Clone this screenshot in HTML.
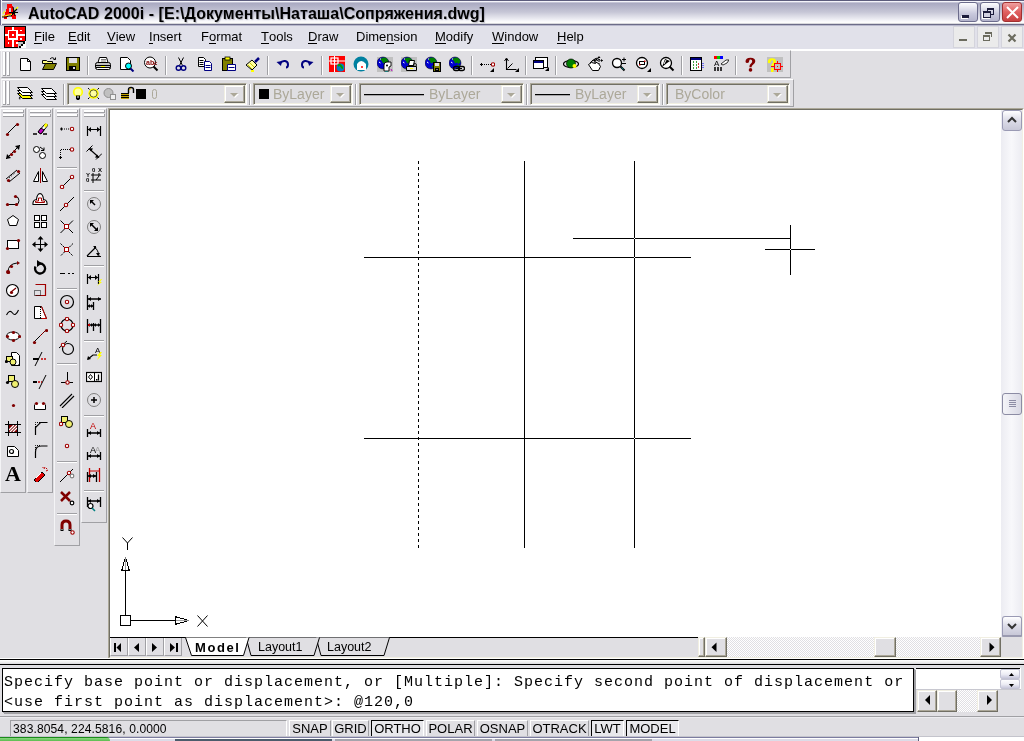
<!DOCTYPE html><html><head><meta charset="utf-8"><style>*{margin:0;padding:0;box-sizing:border-box}
html,body{width:1024px;height:741px;overflow:hidden;background:#e0dfe3;font-family:"Liberation Sans",sans-serif;position:relative}
#root{position:absolute;left:0;top:0;width:1024px;height:741px;will-change:transform}
.a{position:absolute}
#title{left:0;top:0;width:1024px;height:25px;border-left:1px solid #6a6a8a;box-shadow:inset 1px 0 0 #f4f4fa;background:linear-gradient(#5c5c7c 0,#5c5c7c 1px,#f4f4fa 1px,#f4f4fa 2px,#c4c4d6 2px,#c4c4d6 3px,#a9a9c1 3px,#c6c6d6 12px,#f6f6fa 21px,#fcfcfc 22px,#fcfcfc 23px,#d8d8dc 23px,#d8d8dc 24px,#6c6c88 24px,#6c6c88 25px)}
#title .t{left:27px;top:5px;letter-spacing:.05px;font-size:16px;font-weight:bold;color:#000;line-height:18px;white-space:nowrap;text-shadow:1px 1px 1px rgba(120,120,140,.45)}
.tbtn{top:2px;width:20px;height:20px;border:1px solid #6c6c8c;border-radius:3px;background:linear-gradient(#fdfdff,#c8c8dc 60%,#b4b4cc)}
.tbtn.cls{border-color:#a03030;background:linear-gradient(#f0a0a0,#e06060 50%,#c84040)}
#menubar{left:0;top:25px;width:1024px;height:24px;background:linear-gradient(#b8b8cc 0,#b8b8cc 1px,#e1e1ea 1px)}
.mbtn{top:26px;width:22px;height:22px;background:#ebebeb;border:1px solid #d4d4dc}
.menu{top:29px;font-size:13px;line-height:15px;color:#000;white-space:nowrap}
.menu u{text-decoration:none;border-bottom:1px solid #000;display:inline-block;line-height:13px}
.tb{background:#e0dfe3;border-top:1px solid #fff;border-left:1px solid #f4f4f6;border-right:1px solid #a0a0a4;border-bottom:1px solid #a0a0a4}
.vsep{width:2px;border-left:1px solid #a0a0a4;border-right:1px solid #fff}
.hsep{height:2px;border-top:1px solid #a0a0a4;border-bottom:1px solid #fff}
.combo{top:83px;height:22px;background:#e0dfe3;border-top:1px solid #aca899;border-left:1px solid #aca899;border-right:1px solid #fff;border-bottom:1px solid #fff;box-shadow:inset 1px 1px 0 #716f64, inset -1px -1px 0 #f1efe2}
.combo .dd{position:absolute;right:1px;top:1px;width:21px;height:18px;border-top:1px solid #f1efe2;border-left:1px solid #f1efe2;border-right:1px solid #716f64;border-bottom:1px solid #716f64;box-shadow:inset -1px -1px 0 #aca899, inset 1px 1px 0 #fff}
.combo .dd:before{content:"";position:absolute;left:6px;top:8px;border-left:4px solid transparent;border-right:4px solid transparent;border-top:4px solid #fff}
.combo .dd:after{content:"";position:absolute;left:5px;top:7px;border-left:4px solid transparent;border-right:4px solid transparent;border-top:4px solid #aca899}
.combo .tx{position:absolute;top:2px;font-size:14px;color:#aca899;line-height:16px;white-space:nowrap}
#draw{left:110px;top:110px;width:892px;height:527px;background:#fff}
.sbtn{width:20px;height:21px;border:1px solid #9a9ab4;border-radius:3px;background:linear-gradient(#ffffff,#dcdce8 50%,#c8c8d8)}
.sthumb{width:20px;height:22px;border:1px solid #8c8ca4;border-radius:3px;background:linear-gradient(90deg,#f4f4f8,#d8d8e4)}
.cbtn{background:#e0dfe3;border-top:1px solid #f1efe2;border-left:1px solid #f1efe2;border-right:1px solid #716f64;border-bottom:1px solid #716f64;box-shadow:inset -1px -1px 0 #aca899, inset 1px 1px 0 #fff}
.dither{background:repeating-conic-gradient(#fff 0 25%,#e0dfe3 0 50%) 0 0/2px 2px}
.cmd{font-family:"Liberation Mono",monospace;font-size:15px;letter-spacing:1px;line-height:20px;white-space:pre;color:#000}
.sunk{border-top:1px solid #a0a0a4;border-left:1px solid #a0a0a4;border-right:1px solid #fff;border-bottom:1px solid #fff}
.sbb{border-top:1px solid #fff;border-left:1px solid #fff;border-right:1px solid #a0a0a4;border-bottom:1px solid #a0a0a4}
.sbp{border-top:1px solid #000;border-left:1px solid #000;border-right:1px solid #fff;border-bottom:1px solid #fff;background:#e8e8ec}
.st{position:absolute;top:0;font-size:13px;line-height:15px;white-space:nowrap;color:#000}
.sunk .st{font-size:13px;transform:scaleX(.93);transform-origin:0 0}
.navb{background:#e0dfe3;border-left:1px solid #fff;border-right:1px solid #a0a0a4;border-bottom:1px solid #a0a0a4}
.gl{background:#fff;border-right:1px solid #a0a0a4;border-bottom:1px solid #a0a0a4}
.spin{border:1px solid #c4c4d4;border-radius:2px;background:linear-gradient(#fdfdff,#ececf4 55%,#c8c8dc)}
</style></head><body><div id="root">
<div id="title" class="a"><div class="t a">AutoCAD 2000i - [E:\Документы\Наташа\Сопряжения.dwg]</div></div>
<svg class="a" style="left:0;top:0" width="24" height="24" viewBox="0 0 24 24" shape-rendering="crispEdges"><path d="M7 4h5l1 4 1 4 2 4v3h-4l-1-4H8l-1 4H4v-3l2-5 1-4z" fill="#f00"/><rect x="9" y="8" width="2" height="4" fill="#c8c8d8"/><path d="M2 16h3l3-1h3l2-2h3" fill="none" stroke="#ff0" stroke-width="1.2" shape-rendering="auto"/><path d="M2 17h4l3-1h2l2-2" fill="none" stroke="#000" stroke-width="1" shape-rendering="auto"/><path d="M3 14l2-3" stroke="#ff0" stroke-width="1.2" shape-rendering="auto"/><path d="M15 10l3-3" stroke="#ff0" stroke-width="1.5" shape-rendering="auto"/><path d="M13 7l2 9M9 12.5h9M12 14l5-5" stroke="#000" stroke-width="1.1" shape-rendering="auto"/><circle cx="14" cy="12.5" r="1.6" fill="#000"/></svg>
<div class="a tbtn" style="left:958px"><div class="a" style="left:3px;top:12px;width:7px;height:3px;background:#1c1c3c;box-shadow:-1px 1px 0 #fff"></div></div>
<div class="a tbtn" style="left:980px"><div class="a" style="left:6px;top:5px;width:7px;height:7px;border:1px solid #1c1c3c;border-top-width:2px"></div><div class="a" style="left:2px;top:8px;width:8px;height:7px;border:1px solid #1c1c3c;border-top-width:2px;background:#d0d0e0;box-shadow:-1px 1px 0 #fff"></div></div>
<div class="a tbtn cls" style="left:1002px"><svg class="a" style="left:2px;top:2px" width="15" height="15"><path d="M2 2l11 11M13 2L2 13" stroke="#fff" stroke-width="2"/></svg></div>
<div id="menubar" class="a"></div>
<div class="menu a" style="left:34px"><u>F</u>ile</div>
<div class="menu a" style="left:68px"><u>E</u>dit</div>
<div class="menu a" style="left:107px"><u>V</u>iew</div>
<div class="menu a" style="left:149px"><u>I</u>nsert</div>
<div class="menu a" style="left:201px">F<u>o</u>rmat</div>
<div class="menu a" style="left:261px"><u>T</u>ools</div>
<div class="menu a" style="left:308px"><u>D</u>raw</div>
<div class="menu a" style="left:356px">Dime<u>n</u>sion</div>
<div class="menu a" style="left:435px"><u>M</u>odify</div>
<div class="menu a" style="left:492px"><u>W</u>indow</div>
<div class="menu a" style="left:557px"><u>H</u>elp</div>
<svg class="a" style="left:4px;top:26px" width="22" height="22" viewBox="0 0 22 22" shape-rendering="crispEdges"><rect x="0" y="0" width="22" height="22" fill="#000"/><rect x="1" y="1" width="20" height="20" fill="#f00"/><rect x="8" y="1" width="2" height="20" fill="#fff"/><rect x="1" y="8" width="20" height="2" fill="#fff"/><rect x="4" y="4" width="10" height="10" fill="#fff"/><rect x="5" y="5" width="7" height="7" fill="#f00"/><rect x="8" y="8" width="2" height="2" fill="#fff"/><rect x="16" y="4" width="2" height="1" fill="#fff"/><rect x="16" y="12" width="2" height="2" fill="#fff"/><rect x="4" y="16" width="1" height="2" fill="#fff"/><rect x="12" y="16" width="2" height="2" fill="#fff"/><path d="M14 15h8v7h-8z" fill="#fff"/><path d="M14 22v-7h7z" fill="#c0c0c0"/><path d="M14 15h7" stroke="#000"/><rect x="19" y="16" width="2" height="2" fill="#000"/><rect x="17" y="18" width="2" height="2" fill="#000"/><rect x="15" y="20" width="2" height="2" fill="#000"/></svg>
<div class="a mbtn" style="left:953px"><div class="a" style="left:5px;top:12px;width:8px;height:2px;background:#6b6b5e"></div></div>
<div class="a mbtn" style="left:977px"><div class="a" style="left:7px;top:5px;width:7px;height:5px;border:solid #6b6b5e;border-width:2px 1px 0 0"></div><div class="a" style="left:5px;top:8px;width:7px;height:6px;border:1px solid #6b6b5e;border-top-width:2px"></div></div>
<div class="a mbtn" style="left:1001px"><svg class="a" style="left:5px;top:6px" width="10" height="10"><path d="M1.5 1.5l7 7M8.5 1.5l-7 7" stroke="#6b6b5e" stroke-width="2.2"/></svg></div>
<div class="a" style="left:0;top:49px;width:1024px;height:2px;background:#fff"></div>
<div class="a tb" style="left:1px;top:50px;width:790px;height:28px"></div>
<div class="a gl" style="left:3px;top:52px;width:3px;height:24px"></div><div class="a gl" style="left:7px;top:52px;width:3px;height:24px"></div>
<svg class="a" style="left:17px;top:56px" width="16" height="16" viewBox="0 0 16 16"><path d="M3.5 2.5h7l3 3v9h-10z" fill="#fff" stroke="#000"/><path d="M10.5 2.5v3h3" fill="none" stroke="#000"/></svg>
<svg class="a" style="left:41px;top:56px" width="16" height="16" viewBox="0 0 16 16"><path d="M1.5 4.5h4l1 1h5v2h-10z" fill="#ffff80" stroke="#000"/><path d="M1.5 13.5l3-6h11l-3 6z" fill="#808000" stroke="#000"/><path d="M9 3q3-3 5 1" fill="none" stroke="#000"/><path d="M12.5 3.5h2v-2" fill="none" stroke="#000"/></svg>
<svg class="a" style="left:65px;top:56px" width="16" height="16" viewBox="0 0 16 16"><rect x="1.5" y="1.5" width="13" height="13" fill="#808000" stroke="#000"/><rect x="4" y="2" width="8" height="5" fill="#e0dfe3"/><rect x="4" y="10" width="7" height="4" fill="#000"/><rect x="8" y="11" width="2" height="2" fill="#e0dfe3"/></svg>
<div class="a vsep" style="left:87px;top:56px;height:19px"></div>
<svg class="a" style="left:95px;top:56px" width="16" height="16" viewBox="0 0 16 16"><path d="M4.5 1.5h7l1.5 5h-10z" fill="#fff" stroke="#000"/><path d="M6 3.5h5M6 5h5" stroke="#808080"/><rect x="0.5" y="6.5" width="15" height="7" rx="2" fill="#c0c0c0" stroke="#000"/><path d="M1 9.5h14M1 11.5h14" stroke="#000"/><rect x="6" y="10" width="4" height="1" fill="#ff0"/><rect x="2" y="12" width="12" height="1" fill="#fff"/></svg>
<svg class="a" style="left:119px;top:56px" width="16" height="16" viewBox="0 0 16 16"><path d="M1.5 1.5h7l3 3v9h-10z" fill="#fff" stroke="#000"/><circle cx="9.5" cy="10" r="3" fill="#0ff" stroke="#000"/><path d="M11.5 12.5l3 3" stroke="#000080" stroke-width="2"/></svg>
<svg class="a" style="left:143px;top:56px" width="16" height="16" viewBox="0 0 16 16"><circle cx="7" cy="6.5" r="5.5" fill="#fff" stroke="#000"/><text x="3" y="9" font-size="7" font-weight="bold" fill="#800000" font-family="Liberation Sans">ab</text><text x="11" y="9" font-size="6" font-weight="bold" fill="#800000" font-family="Liberation Sans">c</text><path d="M10.5 10.5l4 4" stroke="#000" stroke-width="2"/></svg>
<div class="a vsep" style="left:165px;top:56px;height:19px"></div>
<svg class="a" style="left:173px;top:56px" width="16" height="16" viewBox="0 0 16 16"><path d="M5.5 1.5l4 8M10.5 1.5l-4 8" stroke="#000" fill="none"/><circle cx="5.5" cy="12" r="2.3" fill="none" stroke="#000080" stroke-width="1.4"/><circle cx="10.5" cy="12" r="2.3" fill="none" stroke="#000080" stroke-width="1.4"/></svg>
<svg class="a" style="left:197px;top:56px" width="16" height="16" viewBox="0 0 16 16"><path d="M1.5 1.5h5l2 2v7h-7z" fill="#fff" stroke="#000"/><path d="M2.5 4.5h4M2.5 6.5h4M2.5 8.5h4" stroke="#000"/><path d="M7.5 5.5h5l2 2v7h-7z" fill="#fff" stroke="#000080"/><path d="M8.5 9.5h5M8.5 11.5h5" stroke="#000080"/></svg>
<svg class="a" style="left:221px;top:56px" width="16" height="16" viewBox="0 0 16 16"><rect x="1.5" y="2.5" width="10" height="12" fill="#808000" stroke="#000"/><rect x="4" y="1" width="5" height="3" fill="#ff0" stroke="#000" stroke-width=".8"/><path d="M6.5 8.5h8v6h-8z" fill="#fff" stroke="#000080"/><path d="M7.5 11.5h6" stroke="#000080"/></svg>
<svg class="a" style="left:245px;top:56px" width="16" height="16" viewBox="0 0 16 16"><path d="M1 9l6-5 5 5-5 5z" fill="#ffffa0" stroke="#000"/><path d="M3 9l4 4M5 7l4 4" stroke="#c8c800"/><path d="M10 6l4-4" stroke="#000080" stroke-width="2.5"/><rect x="6" y="14" width="3" height="2" fill="#ff0"/></svg>
<div class="a vsep" style="left:267px;top:56px;height:19px"></div>
<svg class="a" style="left:275px;top:56px" width="16" height="16" viewBox="0 0 16 16"><path d="M5 7.5q2-3 5-2.5q3 .5 3 3.5t-2 3" fill="none" stroke="#000080" stroke-width="2"/><path d="M1.5 6l5.5-1-1 5z" fill="#000080"/></svg>
<svg class="a" style="left:299px;top:56px" width="16" height="16" viewBox="0 0 16 16"><path d="M11 7.5q-2-3-5-2.5q-3 .5-3 3.5t2 3" fill="none" stroke="#000080" stroke-width="2"/><path d="M14.5 6l-5.5-1 1 5z" fill="#000080"/></svg>
<div class="a vsep" style="left:321px;top:56px;height:19px"></div>
<svg class="a" style="left:329px;top:56px" width="16" height="16" viewBox="0 0 16 16"><rect x="0" y="0" width="16" height="16" fill="#f00"/><rect x="2" y="2" width="7" height="6" fill="none" stroke="#fff" stroke-width="1.2"/><rect x="4.5" y="4" width="2" height="2" fill="#fff"/><path d="M5.5 0v16M0 5h16" stroke="#fff" stroke-width="1"/><circle cx="11.5" cy="11.5" r="4" fill="#0080c0"/><path d="M9 10q2-2 3 0t2 2" stroke="#00a000" stroke-width="2" fill="none"/></svg>
<svg class="a" style="left:353px;top:56px" width="16" height="16" viewBox="0 0 16 16"><circle cx="8" cy="8" r="7.5" fill="#0080a0"/><path d="M4 8q4-6 9 0v6h-9z" fill="#fff"/><circle cx="9" cy="11" r="1" fill="#f00"/></svg>
<svg class="a" style="left:377px;top:56px" width="16" height="16" viewBox="0 0 16 16"><rect x="0" y="1" width="16" height="15" fill="#c0c0c0"/><circle cx="6" cy="7" r="6" fill="#0000d0" stroke="#000" stroke-width=".5"/><path d="M3 3.5q3-3 6-1.5 2 1 2.5 4l-2 2-1.5-1.5-2 1-1-2.5z" fill="#008000"/><path d="M2 6l1.5 1M3 3l1 0" stroke="#fff" stroke-width="1"/><path d="M7 11l2-1.5 2 1.5" stroke="#008000" stroke-width="1.5" fill="none"/><path d="M7 9q0-3 3-3h4v4l-2 1v4h-5z" fill="#fff" stroke="#000" stroke-width=".9"/><circle cx="10" cy="9.5" r="1" fill="#000"/><path d="M8 16h3" stroke="#008080" stroke-width="1.5"/><path d="M14 13l1 2" stroke="#c000c0"/></svg>
<svg class="a" style="left:401px;top:56px" width="16" height="16" viewBox="0 0 16 16"><rect x="0" y="1" width="16" height="15" fill="#c0c0c0"/><circle cx="6" cy="7" r="6" fill="#0000d0" stroke="#000" stroke-width=".5"/><path d="M3 3.5q3-3 6-1.5 2 1 2.5 4l-2 2-1.5-1.5-2 1-1-2.5z" fill="#008000"/><path d="M2 6l1.5 1M3 3l1 0" stroke="#fff" stroke-width="1"/><path d="M7 11l2-1.5 2 1.5" stroke="#008000" stroke-width="1.5" fill="none"/><path d="M8.5 4.5h5l-1 5h-5z" fill="#fff" stroke="#000"/><path d="M5.5 10.5h10v4h-10z" fill="#e0dfe3" stroke="#000"/><rect x="9" y="12" width="3" height="1" fill="#ff0"/><circle cx="14" cy="9" r="1.5" fill="none" stroke="#000" stroke-width=".8"/></svg>
<svg class="a" style="left:425px;top:56px" width="16" height="16" viewBox="0 0 16 16"><circle cx="6" cy="7" r="6" fill="#0000d0" stroke="#000" stroke-width=".5"/><path d="M3 3.5q3-3 6-1.5 2 1 2.5 4l-2 2-1.5-1.5-2 1-1-2.5z" fill="#008000"/><path d="M2 6l1.5 1M3 3l1 0" stroke="#fff" stroke-width="1"/><path d="M7 11l2-1.5 2 1.5" stroke="#008000" stroke-width="1.5" fill="none"/><rect x="8.5" y="6.5" width="7" height="9" fill="#808000" stroke="#000"/><rect x="10" y="7" width="4" height="3" fill="#e0e0e0"/><rect x="10" y="12" width="4" height="3" fill="#000"/><rect x="11.5" y="13" width="1" height="1" fill="#fff"/></svg>
<svg class="a" style="left:449px;top:56px" width="16" height="16" viewBox="0 0 16 16"><circle cx="6" cy="7" r="6" fill="#0000d0" stroke="#000" stroke-width=".5"/><path d="M3 3.5q3-3 6-1.5 2 1 2.5 4l-2 2-1.5-1.5-2 1-1-2.5z" fill="#008000"/><path d="M2 6l1.5 1M3 3l1 0" stroke="#fff" stroke-width="1"/><path d="M7 11l2-1.5 2 1.5" stroke="#008000" stroke-width="1.5" fill="none"/><rect x="4.5" y="10.5" width="6" height="4" rx="2" fill="none" stroke="#000" stroke-width="1.4"/><rect x="9.5" y="10.5" width="6" height="4" rx="2" fill="none" stroke="#000" stroke-width="1.4"/><path d="M7 12.5h6" stroke="#000"/></svg>
<div class="a vsep" style="left:471px;top:56px;height:19px"></div>
<svg class="a" style="left:479px;top:56px" width="16" height="16" viewBox="0 0 16 16"><path d="M1 8.5h3M2.5 7v3" stroke="#000"/><path d="M5 8.5h1M7 8.5h1M9 8.5h1M11 8.5h1" stroke="#000"/><circle cx="14" cy="8.5" r="1.7" fill="#fff" stroke="#a00000" stroke-width="1.1"/><path d="M11 16h4v-4z" fill="#000"/></svg>
<svg class="a" style="left:503px;top:56px" width="16" height="16" viewBox="0 0 16 16"><path d="M3.5 3v10.5h10" fill="none" stroke="#000" stroke-width="1.1"/><path d="M1.5 5l2-3 2 3" fill="none" stroke="#000"/><path d="M4.5 12.5l5-5" stroke="#000"/><path d="M12 16h4v-4z" fill="#000"/></svg>
<div class="a vsep" style="left:525px;top:56px;height:19px"></div>
<svg class="a" style="left:533px;top:56px" width="16" height="16" viewBox="0 0 16 16"><rect x="2.5" y="1.5" width="12" height="10" fill="#fff" stroke="#000"/><rect x="0.5" y="4.5" width="10" height="8" fill="#fff" stroke="#000"/><rect x="1" y="5" width="9" height="2" fill="#000080"/><path d="M12 15h4v-4z" fill="#000"/></svg>
<div class="a vsep" style="left:555px;top:56px;height:19px"></div>
<svg class="a" style="left:563px;top:56px" width="16" height="16" viewBox="0 0 16 16"><ellipse cx="8" cy="8" rx="7.5" ry="3.5" fill="none" stroke="#000" stroke-width="1.2"/><circle cx="8" cy="7.5" r="4.5" fill="#008000" stroke="#000" stroke-width=".7"/><circle cx="11.5" cy="10" r="2" fill="#ff0"/></svg>
<svg class="a" style="left:587px;top:56px" width="16" height="16" viewBox="0 0 16 16"><path d="M1.5 8.5l3-2 4 1-1-2 4 2 2 3-2 4h-6z" fill="#fff" stroke="#000" stroke-width="1"/><path d="M3 7l3-3 3 1M5 5.5l3-3 3 2M7 4l3-2 3 2" fill="none" stroke="#000" stroke-width="1"/><path d="M12 1v7M8.5 4.5h7" stroke="#000" stroke-dasharray="1 1"/><path d="M12 0l-1.5 2h3zM16 4.5l-2-1.5v3z" fill="#000"/></svg>
<svg class="a" style="left:611px;top:56px" width="16" height="16" viewBox="0 0 16 16"><circle cx="6" cy="7" r="4.5" fill="#fff" stroke="#000" stroke-width="1.3"/><path d="M9.5 10.5l4 4" stroke="#000" stroke-width="2"/><path d="M10.5 11.5l2 2" stroke="#008080" stroke-width="1"/><path d="M11 3.5h4M13 1.5v4M11 7.5h4" stroke="#000"/></svg>
<svg class="a" style="left:635px;top:56px" width="16" height="16" viewBox="0 0 16 16"><circle cx="7" cy="7" r="5.5" fill="#fff" stroke="#000" stroke-width="1.3"/><rect x="4.5" y="5.5" width="5" height="3" fill="none" stroke="#000"/><rect x="4" y="8" width="1.5" height="1.5" fill="#c00000"/><rect x="9" y="4.5" width="1.5" height="1.5" fill="#c00000"/><path d="M12 16h4v-4z" fill="#000"/></svg>
<svg class="a" style="left:659px;top:56px" width="16" height="16" viewBox="0 0 16 16"><circle cx="7" cy="7" r="5.5" fill="#fff" stroke="#000" stroke-width="1.3"/><path d="M10.5 10.5l4 4" stroke="#000" stroke-width="2"/><path d="M3 11l3-8 5 2-3 2z" fill="#000"/><path d="M7 4l-2 4" stroke="#fff"/></svg>
<div class="a vsep" style="left:681px;top:56px;height:19px"></div>
<svg class="a" style="left:689px;top:56px" width="16" height="16" viewBox="0 0 16 16"><rect x="1.5" y="1.5" width="11" height="13" fill="#fff" stroke="#000"/><rect x="2" y="2" width="10" height="2" fill="#000080"/><path d="M4 6h1M7 6h1M4 9h1M7 9h1M4 12h1M7 12h1" stroke="#008000" stroke-width="1.5"/><path d="M9 8h1M9 11h1" stroke="#c00000" stroke-width="1.5"/><path d="M14 7v6" stroke="#0000ff" stroke-dasharray="1 1"/></svg>
<svg class="a" style="left:713px;top:56px" width="16" height="16" viewBox="0 0 16 16"><rect x="1" y="0" width="3" height="3" fill="#f00"/><rect x="4" y="0" width="3" height="3" fill="#0c0"/><rect x="7" y="0" width="3" height="3" fill="#00f"/><text x="1" y="10" font-size="8" font-family="Liberation Sans" fill="#000">A</text><path d="M1 12h2M4 12h2M7 12h2M1 14h2M4 14h2M7 14h2" stroke="#000" stroke-width="1.5"/><path d="M8 8l5-4h3l-2 3-4 2z" fill="#fff" stroke="#000" stroke-width=".8"/></svg>
<div class="a vsep" style="left:735px;top:56px;height:19px"></div>
<svg class="a" style="left:743px;top:56px" width="16" height="16" viewBox="0 0 16 16"><path d="M2.5 5.5Q2.5 1.7 7.5 1.7Q12.3 1.7 12.3 5.3Q12.3 7.8 9.5 9.2Q8.6 9.8 8.6 11.3H6.4Q6.2 8.8 8 7.5Q9.2 6.6 9.2 5.2Q9.2 3.6 7.6 3.6Q6.2 3.6 6.2 5Q6.2 7 4.3 7Q2.5 7 2.5 5.5Z" fill="#800000"/><circle cx="7.5" cy="13.9" r="1.8" fill="#800000"/></svg>
<svg class="a" style="left:767px;top:56px" width="16" height="16" viewBox="0 0 16 16"><rect x="0" y="1" width="16" height="15" fill="#c0c0c0"/><path d="M0.8 6Q0.8 2.2 5 2.2Q9 2.2 9 5.5Q9 7.5 7 8.5Q6.5 9 6.5 10.5H4.2Q4 8.3 5.5 7.2Q6.3 6.6 6.3 5.6Q6.3 4.2 5 4.2Q3.8 4.2 3.8 5.6Q3.8 7.3 2.3 7.3Q0.8 7.3 0.8 6Z" fill="#ff0"/><rect x="4" y="12" width="2.5" height="4" fill="#ff0"/><rect x="7.5" y="7.5" width="6" height="6" fill="none" stroke="#f00"/><path d="M4 10.5h3.5M13.5 10.5h2.5M10.5 5v2.5M10.5 13.5v2.5" stroke="#f00"/><rect x="10" y="10" width="1" height="1" fill="#f00"/></svg>
<div class="a tb" style="left:1px;top:79px;width:793px;height:28px"></div>
<div class="a gl" style="left:3px;top:81px;width:3px;height:24px"></div><div class="a gl" style="left:7px;top:81px;width:3px;height:24px"></div>
<svg class="a" style="left:17px;top:85px" width="16" height="16" viewBox="0 0 16 16"><path d="M0.5 8.5h10l5 5h-10z" fill="#ff0" stroke="#000"/><path d="M0.5 5.5h10l5 5h-10z" fill="#fff" stroke="#000"/><path d="M0.5 2.5h10l5 5h-10z" fill="#fff" stroke="#000"/><path d="M4 10l-3 4 1-1 1 2z" fill="#000"/></svg>
<svg class="a" style="left:41px;top:85px" width="16" height="16" viewBox="0 0 16 16"><path d="M0.5 9.5h10l5 5h-10z" fill="#fff" stroke="#000"/><path d="M0.5 6.5h10l5 5h-10z" fill="#fff" stroke="#000"/><path d="M0.5 3.5h10l5 5h-10z" fill="#fff" stroke="#000"/></svg>
<div class="a vsep" style="left:63px;top:84px;height:21px"></div>
<div class="a combo" style="left:67px;width:180px"><svg class="a" style="left:2px;top:2px" width="110" height="16"><circle cx="8" cy="6" r="4.3" fill="#ffffa0" stroke="#ff0" stroke-width="1.6"/><path d="M6 9.5h4v3l-1 1.5h-2l-1-1.5z" fill="#000"/><rect x="7" y="10.5" width="2" height="1" fill="#fff"/><circle cx="23.5" cy="7.5" r="5.2" fill="#ff0"/><circle cx="23.5" cy="7.5" r="3.6" fill="#ffffa0" stroke="#000" stroke-width=".6"/><path d="M18 2l1.5 1.5M29 2l-1.5 1.5M18 13l1.5-1.5M29 13l-1.5-1.5" stroke="#000"/><circle cx="38.5" cy="7" r="4.5" fill="#c0c0c0" stroke="#909090"/><rect x="40.5" y="8.5" width="5" height="5" fill="#f0f0f0" stroke="#909090"/><rect x="51" y="7" width="8" height="6" fill="#000"/><path d="M51 8.5h8M51 10.5h8M51 12.5h8" stroke="#c0a000"/><path d="M58.5 7V3.5q0-2 2.5-2t2.5 2V7" fill="none" stroke="#000" stroke-width="1.4"/><path d="M59.5 4q0-1.5 1.5-1.5" stroke="#c0a000" fill="none"/><rect x="66" y="3" width="10" height="10" fill="#000"/><rect x="82.5" y="3.5" width="4" height="9" rx="2" fill="none" stroke="#aca899"/></svg><div class="dd"></div></div>
<div class="a vsep" style="left:249px;top:84px;height:21px"></div>
<div class="a combo" style="left:253px;width:100px"><div class="a" style="left:5px;top:5px;width:10px;height:10px;background:#000"></div><div class="tx" style="left:19px">ByLayer</div><div class="dd"></div></div>
<div class="a vsep" style="left:355px;top:84px;height:21px"></div>
<div class="a combo" style="left:359px;width:165px"><div class="a" style="left:4px;top:10px;width:60px;height:1px;background:#000;box-shadow:0 .5px 0 rgba(0,0,0,.5)"></div><div class="tx" style="left:69px">ByLayer</div><div class="dd"></div></div>
<div class="a vsep" style="left:526px;top:84px;height:21px"></div>
<div class="a combo" style="left:530px;width:130px"><div class="a" style="left:4px;top:10px;width:35px;height:1px;background:#000;box-shadow:0 .5px 0 rgba(0,0,0,.5)"></div><div class="tx" style="left:44px">ByLayer</div><div class="dd"></div></div>
<div class="a vsep" style="left:662px;top:84px;height:21px"></div>
<div class="a combo" style="left:666px;width:124px"><div class="tx" style="left:8px">ByColor</div><div class="dd"></div></div>
<div class="a tb" style="left:0px;top:108px;width:26px;height:385px"></div>
<div class="a gl" style="left:3px;top:110px;width:21px;height:3px"></div><div class="a gl" style="left:3px;top:114px;width:21px;height:3px"></div>
<svg class="a" style="left:5px;top:121px" width="16" height="16" viewBox="0 0 16 16"><path d="M2 13L12 3" stroke="#000"/><circle cx="2.5" cy="13.5" r="1.6" fill="#800000"/><circle cx="12.5" cy="3.5" r="1.6" fill="#800000"/></svg>
<svg class="a" style="left:5px;top:144px" width="16" height="16" viewBox="0 0 16 16"><path d="M1 15L15 1" stroke="#000"/><path d="M1 15l1-5 4 4z M15 1l-5 1 4 4z" fill="#000"/><circle cx="6.5" cy="10.5" r="1.6" fill="#800000"/><circle cx="9.5" cy="7.5" r="1.6" fill="#800000"/></svg>
<svg class="a" style="left:5px;top:167px" width="16" height="16" viewBox="0 0 16 16"><path d="M1 12L12 3M4 15L15 6" stroke="#000"/><path d="M4 11l6-5" stroke="#000" stroke-dasharray="1 2"/><circle cx="3.5" cy="13.5" r="1.6" fill="#800000"/><circle cx="13.5" cy="4.5" r="1.6" fill="#800000"/></svg>
<svg class="a" style="left:5px;top:190px" width="16" height="16" viewBox="0 0 16 16"><path d="M2.5 14.5h9M10 6.5q4 0 4 4t-3 4" fill="none" stroke="#000"/><circle cx="2.5" cy="14.5" r="1.6" fill="#800000"/><circle cx="10.5" cy="6.5" r="1.6" fill="#800000"/><circle cx="11.5" cy="14.5" r="1.6" fill="#800000"/></svg>
<svg class="a" style="left:5px;top:213px" width="16" height="16" viewBox="0 0 16 16"><path d="M8 2.5l5.5 4-2 6h-7l-2-6z" fill="#fff" stroke="#000"/></svg>
<svg class="a" style="left:5px;top:236px" width="16" height="16" viewBox="0 0 16 16"><rect x="2.5" y="4.5" width="11" height="8" fill="#fff" stroke="#000"/><circle cx="2.5" cy="12.5" r="1.6" fill="#800000"/><circle cx="13.5" cy="4.5" r="1.6" fill="#800000"/></svg>
<svg class="a" style="left:5px;top:259px" width="16" height="16" viewBox="0 0 16 16"><path d="M3 13q0-8 9-9" fill="none" stroke="#000"/><circle cx="3.5" cy="13.5" r="1.6" fill="#800000"/><circle cx="6.5" cy="7.5" r="1.6" fill="#800000"/><path d="M12 2l3 2-3 2z" fill="#800000"/><circle cx="3" cy="13" r="2" fill="#800000"/></svg>
<svg class="a" style="left:5px;top:282px" width="16" height="16" viewBox="0 0 16 16"><circle cx="7.5" cy="8.5" r="6" fill="#fff" stroke="#000" stroke-width="1.1"/><path d="M6 10l5-4" stroke="#800000" stroke-width="1.3"/><circle cx="6.5" cy="10.5" r="1.6" fill="#800000"/></svg>
<svg class="a" style="left:5px;top:305px" width="16" height="16" viewBox="0 0 16 16"><path d="M1.5 10q3-6 6-2t6-3" fill="none" stroke="#000" stroke-width="1.1"/></svg>
<svg class="a" style="left:5px;top:328px" width="16" height="16" viewBox="0 0 16 16"><ellipse cx="8" cy="8" rx="6.5" ry="4" fill="#fff" stroke="#000"/><circle cx="2.5" cy="8.5" r="1.6" fill="#800000"/><circle cx="14.5" cy="8.5" r="1.6" fill="#800000"/><circle cx="8.5" cy="4.5" r="1.6" fill="#800000"/><circle cx="8.5" cy="12.5" r="1.6" fill="#800000"/></svg>
<svg class="a" style="left:5px;top:351px" width="16" height="16" viewBox="0 0 16 16"><path d="M6.5 1.5h5l3 3v10h-8z" fill="#fff" stroke="#000"/><rect x="1.5" y="5.5" width="6" height="5" fill="#f0f070" stroke="#000"/><circle cx="8" cy="11" r="3" fill="#f0f070" stroke="#000"/><path d="M12 15h3v-3z" fill="#000"/><circle cx="1.5" cy="10.5" r="1.6" fill="#000"/></svg>
<svg class="a" style="left:5px;top:374px" width="16" height="16" viewBox="0 0 16 16"><rect x="3.5" y="1.5" width="6" height="6" fill="#f0f070" stroke="#000"/><circle cx="10" cy="10" r="3.5" fill="#f0f070" stroke="#000"/><circle cx="2.5" cy="8.5" r="1.6" fill="#000"/></svg>
<svg class="a" style="left:5px;top:397px" width="16" height="16" viewBox="0 0 16 16"><circle cx="8.5" cy="8.5" r="1.6" fill="#800000"/></svg>
<svg class="a" style="left:5px;top:420px" width="16" height="16" viewBox="0 0 16 16"><rect x="3" y="4" width="10" height="9" fill="#800000"/><path d="M4 10l5-5M5 12l7-7M8 12l4-4" stroke="#fff" stroke-width="1.2"/><path d="M0 4.5h16M0 12.5h16M3.5 1v15M12.5 1v15" stroke="#000"/></svg>
<svg class="a" style="left:5px;top:443px" width="16" height="16" viewBox="0 0 16 16"><path d="M2.5 3.5h7l4 4v6h-11z" fill="#fff" stroke="#000"/><circle cx="6.5" cy="8.5" r="2" fill="none" stroke="#000" stroke-width="1.2"/></svg>
<svg class="a" style="left:5px;top:466px" width="16" height="16" viewBox="0 0 16 16"><text x="0" y="15.4" font-size="22" font-family="Liberation Serif" font-weight="bold" fill="#000">A</text></svg>
<div class="a tb" style="left:27px;top:108px;width:26px;height:385px"></div>
<div class="a gl" style="left:30px;top:110px;width:21px;height:3px"></div><div class="a gl" style="left:30px;top:114px;width:21px;height:3px"></div>
<svg class="a" style="left:32px;top:121px" width="16" height="16" viewBox="0 0 16 16"><path d="M6 11l7-8 3 1-7 9z" fill="#fff" stroke="#000"/><path d="M6 11l3-4 3 2-3 4z" fill="#c000c0" stroke="#000"/><path d="M12 4l2-2 2 2-3 3z" fill="#ff0"/><path d="M1 13h4M11 13h4" stroke="#000" stroke-width="1.5"/></svg>
<svg class="a" style="left:32px;top:144px" width="16" height="16" viewBox="0 0 16 16"><circle cx="4.5" cy="5.5" r="3" fill="#fff" stroke="#000"/><circle cx="10.5" cy="11.5" r="3" fill="#fff" stroke="#000"/><path d="M8 3l4 3M12 3.5v3h-3" fill="none" stroke="#000"/></svg>
<svg class="a" style="left:32px;top:167px" width="16" height="16" viewBox="0 0 16 16"><path d="M6.5 4.5v10h-5z M10.5 4.5v10h5z" fill="#fff" stroke="#000"/><path d="M8.5 1v15" stroke="#a00000"/></svg>
<svg class="a" style="left:32px;top:190px" width="16" height="16" viewBox="0 0 16 16"><path d="M1 14.5Q0.5 10 4.5 9.5Q5 4 8 3.5Q11 4 11.5 9.5Q15.5 10 15 14.5Z" fill="#fff" stroke="#000" stroke-width="1.1"/><path d="M3.5 12.5h9v-1.5h-3v-3h-3v3h-3z" fill="#fff" stroke="#a00000" stroke-width="1"/></svg>
<svg class="a" style="left:32px;top:213px" width="16" height="16" viewBox="0 0 16 16"><rect x="2.5" y="2.5" width="5" height="5" fill="#fff" stroke="#000"/><rect x="9.5" y="2.5" width="5" height="5" fill="#fff" stroke="#000"/><rect x="2.5" y="9.5" width="5" height="5" fill="#fff" stroke="#000"/><rect x="9.5" y="9.5" width="5" height="5" fill="#fff" stroke="#000"/></svg>
<svg class="a" style="left:32px;top:236px" width="16" height="16" viewBox="0 0 16 16"><path d="M8.5 2v13M2 8.5h13" stroke="#000"/><path d="M8.5 0l3 3.5h-6zM8.5 16l3-3.5h-6zM0 8.5l3.5 3v-6zM16 8.5l-3.5 3v-6z" fill="#000"/></svg>
<svg class="a" style="left:32px;top:259px" width="16" height="16" viewBox="0 0 16 16"><path d="M8 4.5A5 5 0 1 1 3.5 7.5" fill="none" stroke="#000" stroke-width="2.3"/><path d="M5 1l5 3.5-5 3.5z" fill="#000"/></svg>
<svg class="a" style="left:32px;top:282px" width="16" height="16" viewBox="0 0 16 16"><path d="M3.5 2.5h10v11h-10" fill="none" stroke="#a00000" stroke-width="1.2"/><path d="M2.5 8.5h6v5h-6z" fill="none" stroke="#000" stroke-dasharray="1 1"/></svg>
<svg class="a" style="left:32px;top:305px" width="16" height="16" viewBox="0 0 16 16"><path d="M2.5 1.5h7l5 12h-12z" fill="#fff" stroke="#000"/><path d="M9.5 1.5l5 12h-5" fill="none" stroke="#c00000"/><path d="M8.5 2v11" stroke="#000" stroke-dasharray="1 1"/></svg>
<svg class="a" style="left:32px;top:328px" width="16" height="16" viewBox="0 0 16 16"><path d="M2 14L14 2" stroke="#000"/><path d="M8 8l6-6" stroke="#c00000" stroke-dasharray="1.5 1"/><circle cx="2.5" cy="14.5" r="1.6" fill="#800000"/><circle cx="14.5" cy="2.5" r="1.6" fill="#800000"/></svg>
<svg class="a" style="left:32px;top:351px" width="16" height="16" viewBox="0 0 16 16"><path d="M3 15L10 1" stroke="#000"/><path d="M1 8h6" stroke="#000" stroke-width="2"/><path d="M9 8h6" stroke="#c00000" stroke-width="1.5" stroke-dasharray="2 1"/></svg>
<svg class="a" style="left:32px;top:374px" width="16" height="16" viewBox="0 0 16 16"><path d="M7 15L14 1" stroke="#000"/><path d="M1 8h4" stroke="#000" stroke-width="2"/><path d="M6 8h4" stroke="#c00000" stroke-width="1.5" stroke-dasharray="2 1"/></svg>
<svg class="a" style="left:32px;top:397px" width="16" height="16" viewBox="0 0 16 16"><path d="M2.5 6.5v6h11v-6" fill="#fff" stroke="#000"/><path d="M2 7h12" stroke="#fff"/><circle cx="4.5" cy="6.5" r="1.6" fill="#800000"/><circle cx="11.5" cy="6.5" r="1.6" fill="#800000"/></svg>
<svg class="a" style="left:32px;top:420px" width="16" height="16" viewBox="0 0 16 16"><path d="M3.5 15V7.5l5-5h7" fill="none" stroke="#000" stroke-width="1.2"/><path d="M3.5 7V2.5h5" fill="none" stroke="#000" stroke-dasharray="1 1"/></svg>
<svg class="a" style="left:32px;top:443px" width="16" height="16" viewBox="0 0 16 16"><path d="M3.5 15V9q0-6 6-6h6" fill="none" stroke="#000" stroke-width="1.2"/><path d="M3.5 7V2.5h5" fill="none" stroke="#000" stroke-dasharray="1 1"/></svg>
<svg class="a" style="left:32px;top:466px" width="16" height="16" viewBox="0 0 16 16"><path d="M2 14l8-8 3 3-8 8z" fill="#e00000" stroke="#000"/><path d="M4 12l5-5" stroke="#fff"/><path d="M12 3l1-2M14 5l2-1M11 1v1M15 2l-1 1" stroke="#c00000"/></svg>
<div class="a tb" style="left:54px;top:108px;width:26px;height:438px"></div>
<div class="a gl" style="left:57px;top:110px;width:21px;height:3px"></div><div class="a gl" style="left:57px;top:114px;width:21px;height:3px"></div>
<div class="a hsep" style="left:57px;top:167px;width:20px"></div>
<div class="a hsep" style="left:57px;top:288px;width:20px"></div>
<div class="a hsep" style="left:57px;top:363px;width:20px"></div>
<div class="a hsep" style="left:57px;top:461px;width:20px"></div>
<div class="a hsep" style="left:57px;top:513px;width:20px"></div>
<svg class="a" style="left:59px;top:121px" width="16" height="16" viewBox="0 0 16 16"><path d="M1 8h3M2.5 6.5v3" stroke="#000" stroke-width="1.2"/><path d="M5 8h1M7 8h1M9 8h1" stroke="#000"/><circle cx="13" cy="8" r="1.7" fill="#fff" stroke="#a00000" stroke-width="1.1"/></svg>
<svg class="a" style="left:59px;top:144px" width="16" height="16" viewBox="0 0 16 16"><path d="M1.5 6v7" stroke="#000" stroke-dasharray="1 1"/><path d="M2 5.5h9" stroke="#000" stroke-dasharray="1 1"/><path d="M0 13.5h3M1.5 12v3" stroke="#000"/><circle cx="13" cy="5.5" r="1.7" fill="#fff" stroke="#a00000" stroke-width="1.1"/></svg>
<svg class="a" style="left:59px;top:173px" width="16" height="16" viewBox="0 0 16 16"><path d="M3 14L13 4" stroke="#000"/><circle cx="3" cy="14" r="1.7" fill="#fff" stroke="#a00000" stroke-width="1.1"/><circle cx="13" cy="4" r="1.7" fill="#fff" stroke="#a00000" stroke-width="1.1"/></svg>
<svg class="a" style="left:59px;top:196px" width="16" height="16" viewBox="0 0 16 16"><path d="M1 15L15 1" stroke="#000"/><circle cx="7" cy="9" r="1.7" fill="#fff" stroke="#a00000" stroke-width="1.1"/></svg>
<svg class="a" style="left:59px;top:219px" width="16" height="16" viewBox="0 0 16 16"><path d="M1.5 1.5L14 14M14 1.5L1.5 14" stroke="#000"/><rect x="5.5" y="5.5" width="4" height="4" fill="#fff" stroke="#a00000"/></svg>
<svg class="a" style="left:59px;top:242px" width="16" height="16" viewBox="0 0 16 16"><path d="M1.5 1.5L14 14M14 1.5L1.5 14" stroke="#000" stroke-dasharray="2 1"/><rect x="5.5" y="5.5" width="4" height="4" fill="#fff" stroke="#a00000"/></svg>
<svg class="a" style="left:59px;top:265px" width="16" height="16" viewBox="0 0 16 16"><path d="M1 8.5h5M9 8.5h2M13 8.5h2" stroke="#000" stroke-width="1.2"/></svg>
<svg class="a" style="left:59px;top:294px" width="16" height="16" viewBox="0 0 16 16"><circle cx="8" cy="8" r="6.5" fill="none" stroke="#000" stroke-width="1.2"/><circle cx="8" cy="8" r="1.7" fill="#fff" stroke="#a00000" stroke-width="1.1"/></svg>
<svg class="a" style="left:59px;top:317px" width="16" height="16" viewBox="0 0 16 16"><circle cx="8" cy="8" r="6" fill="none" stroke="#000" stroke-width="1.2"/><circle cx="8" cy="2" r="1.7" fill="#fff" stroke="#a00000" stroke-width="1.1"/><circle cx="2" cy="8" r="1.7" fill="#fff" stroke="#a00000" stroke-width="1.1"/><circle cx="14" cy="8" r="1.7" fill="#fff" stroke="#a00000" stroke-width="1.1"/><circle cx="8" cy="14" r="1.7" fill="#fff" stroke="#a00000" stroke-width="1.1"/></svg>
<svg class="a" style="left:59px;top:340px" width="16" height="16" viewBox="0 0 16 16"><circle cx="9" cy="9" r="5.5" fill="none" stroke="#000" stroke-width="1.2"/><path d="M0 8l8-7" stroke="#000"/><circle cx="4" cy="5" r="1.7" fill="#fff" stroke="#a00000" stroke-width="1.1"/></svg>
<svg class="a" style="left:59px;top:369px" width="16" height="16" viewBox="0 0 16 16"><path d="M2 13.5h12M8.5 3v10" stroke="#000"/><circle cx="8.5" cy="13.5" r="1.7" fill="#fff" stroke="#a00000" stroke-width="1.1"/></svg>
<svg class="a" style="left:59px;top:392px" width="16" height="16" viewBox="0 0 16 16"><path d="M1 14L13 2M3 16L15 4" stroke="#000" stroke-width="1.1"/></svg>
<svg class="a" style="left:59px;top:415px" width="16" height="16" viewBox="0 0 16 16"><rect x="2.5" y="1.5" width="6" height="6" fill="#f0f070" stroke="#000"/><circle cx="10" cy="9" r="3.5" fill="#f0f070" stroke="#000"/><circle cx="2" cy="9" r="1.7" fill="#fff" stroke="#a00000" stroke-width="1.1"/></svg>
<svg class="a" style="left:59px;top:438px" width="16" height="16" viewBox="0 0 16 16"><circle cx="8" cy="8" r="1.7" fill="#fff" stroke="#a00000" stroke-width="1.1"/></svg>
<svg class="a" style="left:59px;top:467px" width="16" height="16" viewBox="0 0 16 16"><path d="M1 15L14 2" stroke="#000"/><circle cx="10" cy="6" r="1.7" fill="#fff" stroke="#a00000" stroke-width="1.1"/><circle cx="13" cy="9" r="1.8" fill="#fff" stroke="#808080" stroke-width="1.2"/></svg>
<svg class="a" style="left:59px;top:490px" width="16" height="16" viewBox="0 0 16 16"><path d="M2 2l9 9M11 2l-9 9" stroke="#800000" stroke-width="2.5"/><circle cx="13" cy="13" r="1.8" fill="#fff" stroke="#000" stroke-width="1.2"/></svg>
<svg class="a" style="left:59px;top:519px" width="16" height="16" viewBox="0 0 16 16"><path d="M3 10V6q0-4 4-4t4 4v4" fill="none" stroke="#800000" stroke-width="3"/><rect x="1.5" y="10" width="3" height="2" fill="#000"/><rect x="9.5" y="10" width="3" height="2" fill="#000"/><rect x="2.5" y="10" width="1" height="1" fill="#fff"/><rect x="10.5" y="10" width="1" height="1" fill="#fff"/><circle cx="13.5" cy="13.5" r="1.7" fill="#fff" stroke="#a00000" stroke-width="1.1"/></svg>
<div class="a tb" style="left:81px;top:108px;width:26px;height:415px"></div>
<div class="a gl" style="left:84px;top:110px;width:21px;height:3px"></div><div class="a gl" style="left:84px;top:114px;width:21px;height:3px"></div>
<div class="a hsep" style="left:84px;top:190px;width:20px"></div>
<div class="a hsep" style="left:84px;top:265px;width:20px"></div>
<div class="a hsep" style="left:84px;top:340px;width:20px"></div>
<div class="a hsep" style="left:84px;top:415px;width:20px"></div>
<div class="a hsep" style="left:84px;top:490px;width:20px"></div>
<svg class="a" style="left:86px;top:121px" width="16" height="16" viewBox="0 0 16 16"><path d="M1.5 5v10M14.5 5v10M2 8.5h12" stroke="#000" stroke-width="1.2"/><path d="M2 8.5l3-2.5v5zM14 8.5l-3-2.5v5z" fill="#000"/></svg>
<svg class="a" style="left:86px;top:144px" width="16" height="16" viewBox="0 0 16 16"><path d="M0.5 7.5l6-6M10 15.5l6-6" stroke="#000"/><path d="M3.5 5l9 8" stroke="#000" stroke-width="1.2"/><path d="M2.5 4l4.5 0.5-2 3z M13.5 14l-4.5-0.5 2-3z" fill="#000"/></svg>
<svg class="a" style="left:86px;top:167px" width="16" height="16" viewBox="0 0 16 16"><text x="6" y="5" font-size="6" font-weight="bold" font-family="Liberation Sans">0</text><text x="12" y="5" font-size="6" font-weight="bold" font-family="Liberation Sans">X</text><text x="0" y="10" font-size="6" font-weight="bold" font-family="Liberation Sans">Y</text><text x="0" y="15" font-size="6" font-weight="bold" font-family="Liberation Sans">0</text><path d="M5 8h10M5 13h10M7 6v10M13 6v3l-3 4" stroke="#000" fill="none"/></svg>
<svg class="a" style="left:86px;top:196px" width="16" height="16" viewBox="0 0 16 16"><circle cx="8" cy="8" r="6.5" fill="none" stroke="#808080"/><path d="M5 5l4 4" stroke="#000" stroke-width="1.5"/><path d="M4 4l4 0-4 4z" fill="#000"/></svg>
<svg class="a" style="left:86px;top:219px" width="16" height="16" viewBox="0 0 16 16"><circle cx="8" cy="8" r="6.5" fill="none" stroke="#808080"/><path d="M5 5l6 6" stroke="#000" stroke-width="1.5"/><path d="M4 4l4 0-4 4zM12 12l-4 0 4-4z" fill="#000"/></svg>
<svg class="a" style="left:86px;top:242px" width="16" height="16" viewBox="0 0 16 16"><path d="M1 14.5h14M1 14l9-9" stroke="#000" stroke-width="1.2"/><path d="M8 5q4 2 5 9" fill="none" stroke="#000"/><path d="M7 4l3 0 0 3zM12 14l-2-3h4z" fill="#000"/></svg>
<svg class="a" style="left:86px;top:271px" width="16" height="16" viewBox="0 0 16 16"><path d="M1.5 3v10M12.5 3v10M2 6.5h10" stroke="#000" stroke-width="1.2"/><path d="M2 6.5l3-2.5v5zM12 6.5l-3-2.5v5z" fill="#000"/><path d="M15 8l-3 3h2l-3 4 5-4h-2l2-3z" fill="#ff0"/></svg>
<svg class="a" style="left:86px;top:294px" width="16" height="16" viewBox="0 0 16 16"><path d="M1.5 1v15M7.5 8v8M2 5h13M2 12h5" stroke="#000" stroke-width="1.3"/><path d="M15 5l-3-2v4zM2 5l3-2v4zM2 12l2-2v4zM7 12l-2-2v4z" fill="#000"/></svg>
<svg class="a" style="left:86px;top:317px" width="16" height="16" viewBox="0 0 16 16"><path d="M1.5 2v14M7.5 6v8M14.5 2v14M2 8h12" stroke="#000" stroke-width="1.3"/><path d="M2 8l2-2v4zM7 8l-2-2v4zM8 8l2-2v4zM14 8l-2-2v4z" fill="#000"/><rect x="2" y="7" width="2" height="2" fill="#c00000"/></svg>
<svg class="a" style="left:86px;top:346px" width="16" height="16" viewBox="0 0 16 16"><path d="M2 13l5-4h4" fill="none" stroke="#000" stroke-width="1.2"/><path d="M1 14l1-4 3 3z" fill="#000"/><text x="9" y="7" font-size="8" font-family="Liberation Sans">A</text><path d="M14 6l-3 4h2l-2 4 5-5h-2l2-3z" fill="#ff0"/></svg>
<svg class="a" style="left:86px;top:369px" width="16" height="16" viewBox="0 0 16 16"><rect x="0.5" y="3.5" width="15" height="9" fill="#fff" stroke="#000" stroke-width="1.2"/><path d="M8.5 3v10" stroke="#000"/><path d="M4.5 5.5l2 2.5-2 2.5-2-2.5z" fill="none" stroke="#000"/><rect x="10" y="10" width="1.5" height="1.5" fill="#000"/><path d="M12.5 5.5v6" stroke="#000" stroke-width="1.3"/></svg>
<svg class="a" style="left:86px;top:392px" width="16" height="16" viewBox="0 0 16 16"><circle cx="8" cy="8" r="6.5" fill="none" stroke="#808080"/><path d="M8 5v6M5 8h6" stroke="#000" stroke-width="1.5"/></svg>
<svg class="a" style="left:86px;top:421px" width="16" height="16" viewBox="0 0 16 16"><text x="4" y="8" font-size="9" font-family="Liberation Sans" fill="#c00000">A</text><path d="M1.5 8v8M14.5 8v8M2 12h12" stroke="#000" stroke-width="1.3"/><path d="M2 12l3-2v4zM14 12l-3-2v4z" fill="#000"/></svg>
<svg class="a" style="left:86px;top:444px" width="16" height="16" viewBox="0 0 16 16"><text x="9" y="8" font-size="8" font-family="Liberation Sans" fill="#a0a0a0">A</text><text x="4" y="9" font-size="9" font-family="Liberation Sans" fill="#000">A</text><path d="M1.5 8v8M14.5 8v8M2 12h12" stroke="#000" stroke-width="1.3"/><path d="M2 12l3-2v4zM14 12l-3-2v4z" fill="#000"/></svg>
<svg class="a" style="left:86px;top:467px" width="16" height="16" viewBox="0 0 16 16"><path d="M3.5 1v14M13.5 1v14" stroke="#c00000" stroke-width="1.3"/><path d="M4 4h9" stroke="#c00000"/><path d="M1.5 5v10M10.5 5v10M2 9h8" stroke="#000" stroke-width="1.3"/><path d="M2 9l3-2v4zM10 9l-3-2v4z" fill="#000"/></svg>
<svg class="a" style="left:86px;top:496px" width="16" height="16" viewBox="0 0 16 16"><path d="M1.5 1v10M14.5 1v10M2 5h12" stroke="#000" stroke-width="1.3"/><path d="M2 5l3-2v4zM14 5l-3-2v4z" fill="#000"/><circle cx="4.5" cy="10" r="2.5" fill="#fff" stroke="#000" stroke-width="1.2"/><path d="M6 12l3 3" stroke="#008080" stroke-width="1.5"/></svg>
<div class="a" style="left:108px;top:108px;width:916px;height:551px;border-top:1px solid #aca899;border-left:1px solid #aca899;border-right:1px solid #fff;border-bottom:1px solid #fff"></div>
<div class="a" style="left:109px;top:109px;width:914px;height:549px;border-top:1px solid #716f64;border-left:1px solid #716f64;border-right:1px solid #f1efe2;border-bottom:1px solid #f1efe2"></div>
<div id="draw" class="a"></div>
<svg class="a" style="left:0;top:0" width="1024" height="741" viewBox="0 0 1024 741"><path d="M418.5 161v387" stroke="#000" stroke-dasharray="3 3"/><path d="M524.5 161v387M634.5 161v387" stroke="#000"/><path d="M364 257.5h327M364 438.5h327M573 238.5h218" stroke="#000"/><path d="M790.5 225v50M765 249.5h50" stroke="#000"/><rect x="634" y="257" width="1" height="1" fill="#fff"/><rect x="634" y="438" width="1" height="1" fill="#fff"/><rect x="790" y="249" width="1" height="1" fill="#fff"/><rect x="634" y="238" width="1" height="1" fill="#fff"/><rect x="120" y="615" width="11" height="1" fill="#000"/><rect x="120" y="625" width="11" height="1" fill="#000"/><rect x="120" y="615" width="1" height="11" fill="#000"/><rect x="130" y="615" width="1" height="11" fill="#000"/><rect x="125" y="571" width="1" height="44" fill="#000"/><rect x="121" y="570" width="9" height="1" fill="#000"/><rect x="121" y="569" width="1" height="1" fill="#000"/><rect x="129" y="569" width="1" height="1" fill="#000"/><rect x="122" y="566" width="1" height="4" fill="#000"/><rect x="128" y="566" width="1" height="4" fill="#000"/><rect x="123" y="562" width="1" height="4" fill="#000"/><rect x="127" y="562" width="1" height="4" fill="#000"/><rect x="124" y="559" width="1" height="3" fill="#000"/><rect x="126" y="559" width="1" height="3" fill="#000"/><rect x="125" y="557" width="1" height="2" fill="#808080"/><rect x="125" y="559" width="1" height="11" fill="#a0a0a0"/><rect x="131" y="620" width="44" height="1" fill="#000"/><rect x="175" y="616" width="1" height="9" fill="#000"/><rect x="176" y="616" width="1" height="1" fill="#000"/><rect x="176" y="624" width="1" height="1" fill="#000"/><rect x="176" y="617" width="4" height="1" fill="#000"/><rect x="176" y="623" width="4" height="1" fill="#000"/><rect x="180" y="618" width="4" height="1" fill="#000"/><rect x="180" y="622" width="4" height="1" fill="#000"/><rect x="184" y="619" width="3" height="1" fill="#000"/><rect x="184" y="621" width="3" height="1" fill="#000"/><rect x="187" y="620" width="2" height="1" fill="#808080"/><rect x="176" y="620" width="11" height="1" fill="#a0a0a0"/><path d="M122.5 537.5l5 5.5 5-5.5M127.5 543v7" fill="none" stroke="#000"/><path d="M197.5 615.5l10 11M207.5 615.5l-10 11" stroke="#000"/></svg>
<div class="a" style="left:1001px;top:110px;width:21px;height:527px;background:linear-gradient(90deg,#ececf2,#f8f8fb 50%,#ececf2)"></div>
<div class="a sbtn" style="left:1002px;top:110px"><svg class="a" style="left:4px;top:5px" width="10" height="7"><path d="M1 6l4-4 4 4" fill="none" stroke="#333" stroke-width="2"/></svg></div>
<div class="a sbtn" style="left:1002px;top:616px;border-radius:3px 3px 1px 1px;border-bottom:2px solid #9a9ab0"><svg class="a" style="left:4px;top:6px" width="10" height="7"><path d="M1 1l4 4 4-4" fill="none" stroke="#333" stroke-width="2"/></svg></div>
<div class="a sthumb" style="left:1002px;top:393px"><div class="a" style="left:6px;top:6px;width:7px;height:7px;background:repeating-linear-gradient(#8c8ca4 0 1px,transparent 1px 2px)"></div></div>
<div class="a" style="left:110px;top:637px;width:912px;height:20px;background:#e0dfe3"></div>
<div class="a" style="left:110px;top:637px;width:588px;height:1px;background:#000"></div>
<div class="a navb" style="left:110px;top:638px;width:18px;height:18px"></div>
<div class="a navb" style="left:128px;top:638px;width:18px;height:18px"></div>
<div class="a navb" style="left:146px;top:638px;width:18px;height:18px"></div>
<div class="a navb" style="left:164px;top:638px;width:18px;height:18px"></div>
<svg class="a" style="left:110px;top:638px" width="18" height="18"><path d="M4 5h2v9H4zM11 5v9L6.5 9.5z" fill="#000"/></svg>
<svg class="a" style="left:128px;top:638px" width="18" height="18"><path d="M11 5v9L6 9.5z" fill="#000"/></svg>
<svg class="a" style="left:146px;top:638px" width="18" height="18"><path d="M6 5v9l5-4.5z" fill="#000"/></svg>
<svg class="a" style="left:164px;top:638px" width="18" height="18"><path d="M12 5h2v9h-2zM6 5v9l5-4.5z" fill="#000"/></svg>
<svg class="a" style="left:180px;top:636px" width="220" height="22" viewBox="0 0 220 22"><path d="M209.5 1.5l-5.5 18H141l-5-18" fill="#e0dfe3" stroke="#000"/><path d="M139.5 1.5l-5.5 18H71l-5-18" fill="#e0dfe3" stroke="#000"/><path d="M5.5 1.5l6 18h52l5.5-18" fill="#fff" stroke="#000"/></svg>
<div class="a" style="left:195px;top:641px;font-size:13px;font-weight:bold;line-height:14px;letter-spacing:1.6px">Model</div>
<div class="a" style="left:258px;top:640px;font-size:12.5px;line-height:14px">Layout1</div>
<div class="a" style="left:327px;top:640px;font-size:12.5px;line-height:14px">Layout2</div>
<div class="a cbtn" style="left:698px;top:637px;width:7px;height:20px"></div>
<div class="a dither" style="left:705px;top:637px;width:296px;height:20px"></div>
<div class="a cbtn" style="left:705px;top:637px;width:22px;height:20px"><svg class="a" style="left:5px;top:4px" width="10" height="11"><path d="M5.5 0.5v9.5L0.5 5.2z" fill="#000"/></svg></div>
<div class="a cbtn" style="left:874px;top:637px;width:22px;height:20px"></div>
<div class="a cbtn" style="left:980px;top:637px;width:21px;height:20px"><svg class="a" style="left:8px;top:4px" width="10" height="11"><path d="M0.5 0.5v9.5L5.5 5.2z" fill="#000"/></svg></div>
<div class="a" style="left:0;top:658px;width:1024px;height:1px;background:#fff"></div>
<div class="a" style="left:0;top:659px;width:1024px;height:1px;background:#000"></div>
<div class="a" style="left:0;top:660px;width:1024px;height:3px;background:linear-gradient(#fff,#e8e8e8)"></div>
<div class="a" style="left:0;top:664px;width:1024px;height:1px;background:#000"></div>
<div class="a" style="left:2px;top:668px;width:912px;height:44px;background:#fff;border:1px solid #000;box-shadow:1px 1px 0 #a0a0a4,2px 2px 0 #a0a0a4"></div>
<div class="a cmd" style="left:4px;top:673px">Specify base point or displacement, or [Multiple]: Specify second point of displacement or<br>&lt;use first point as displacement&gt;: @120,0</div>
<div class="a" style="left:916px;top:669px;width:85px;height:20px;background:#fff"></div>
<div class="a" style="left:916px;top:668px;width:105px;height:1px;background:#000"></div>
<div class="a" style="left:1020px;top:668px;width:1px;height:22px;background:#fff"></div>
<div class="a" style="left:916px;top:689px;width:105px;height:1px;background:#c8c8d0"></div>
<div class="a spin" style="left:1000px;top:669px;width:20px;height:10px"><svg class="a" style="left:8px;top:3px" width="5" height="3"><path d="M0 3h5L2.5 0z" fill="#000"/></svg></div>
<div class="a spin" style="left:1000px;top:679px;width:20px;height:10px"><svg class="a" style="left:8px;top:4px" width="5" height="3"><path d="M0 0h5L2.5 3z" fill="#000"/></svg></div>
<div class="a dither" style="left:917px;top:690px;width:80px;height:22px"></div>
<div class="a cbtn" style="left:917px;top:690px;width:20px;height:22px"><svg class="a" style="left:6px;top:4px" width="8" height="11"><path d="M6 0v10L1 5z" fill="#000"/></svg></div>
<div class="a cbtn" style="left:937px;top:690px;width:20px;height:22px"></div>
<div class="a cbtn" style="left:977px;top:690px;width:21px;height:22px"><svg class="a" style="left:8px;top:4px" width="8" height="11"><path d="M1 0v10l5-5z" fill="#000"/></svg></div>
<div class="a" style="left:0;top:716px;width:1024px;height:1px;background:#a0a0a4"></div>
<div class="a" style="left:0;top:717px;width:1024px;height:1px;background:#ececf0"></div>
<div class="a sunk" style="left:10px;top:720px;width:277px;height:17px"><div class="st" style="left:2px;letter-spacing:.1px">383.8054, 224.5816, 0.0000</div></div>
<div class="a sbb" style="left:289px;top:720px;width:42px;height:17px"><div class="st" style="left:0;width:100%;text-align:center">SNAP</div></div>
<div class="a sbb" style="left:332px;top:720px;width:37px;height:17px"><div class="st" style="left:0;width:100%;text-align:center">GRID</div></div>
<div class="a sbp" style="left:371px;top:720px;width:53px;height:17px"><div class="st" style="left:0;width:100%;text-align:center">ORTHO</div></div>
<div class="a sbb" style="left:426px;top:720px;width:49px;height:17px"><div class="st" style="left:0;width:100%;text-align:center">POLAR</div></div>
<div class="a sbb" style="left:477px;top:720px;width:51px;height:17px"><div class="st" style="left:0;width:100%;text-align:center">OSNAP</div></div>
<div class="a sbb" style="left:530px;top:720px;width:59px;height:17px"><div class="st" style="left:0;width:100%;text-align:center">OTRACK</div></div>
<div class="a sbp" style="left:591px;top:720px;width:33px;height:17px"><div class="st" style="left:0;width:100%;text-align:center">LWT</div></div>
<div class="a sbp" style="left:626px;top:720px;width:53px;height:17px"><div class="st" style="left:0;width:100%;text-align:center">MODEL</div></div>
<div class="a" style="left:0;top:736px;width:1024px;height:1px;background:#c4c4cc"></div>
<div class="a" style="left:0;top:737px;width:919px;height:1px;background:#7c7ca0"></div>
<div class="a" style="left:0;top:738px;width:919px;height:3px;background:#dcdce8;border-top:1px solid #fff"></div>
<div class="a" style="left:919px;top:737px;width:105px;height:4px;background:#fff"></div>
<div class="a" style="left:918px;top:737px;width:1px;height:4px;background:#5c5c7c"></div>
<div class="a" style="left:175px;top:739px;width:157px;height:2px;background:#4c5c6c"></div>
<div class="a" style="left:335px;top:739px;width:157px;height:2px;background:#a4a4ac"></div>
<div class="a" style="left:495px;top:739px;width:157px;height:2px;background:#a4a4ac"></div>
<div class="a" style="left:0;top:737px;width:110px;height:4px;background:linear-gradient(#1a8a1a 0,#1a8a1a 1px,#8ad880 1px,#5cbc50);border-radius:0 5px 0 0"></div>
</div></body></html>
